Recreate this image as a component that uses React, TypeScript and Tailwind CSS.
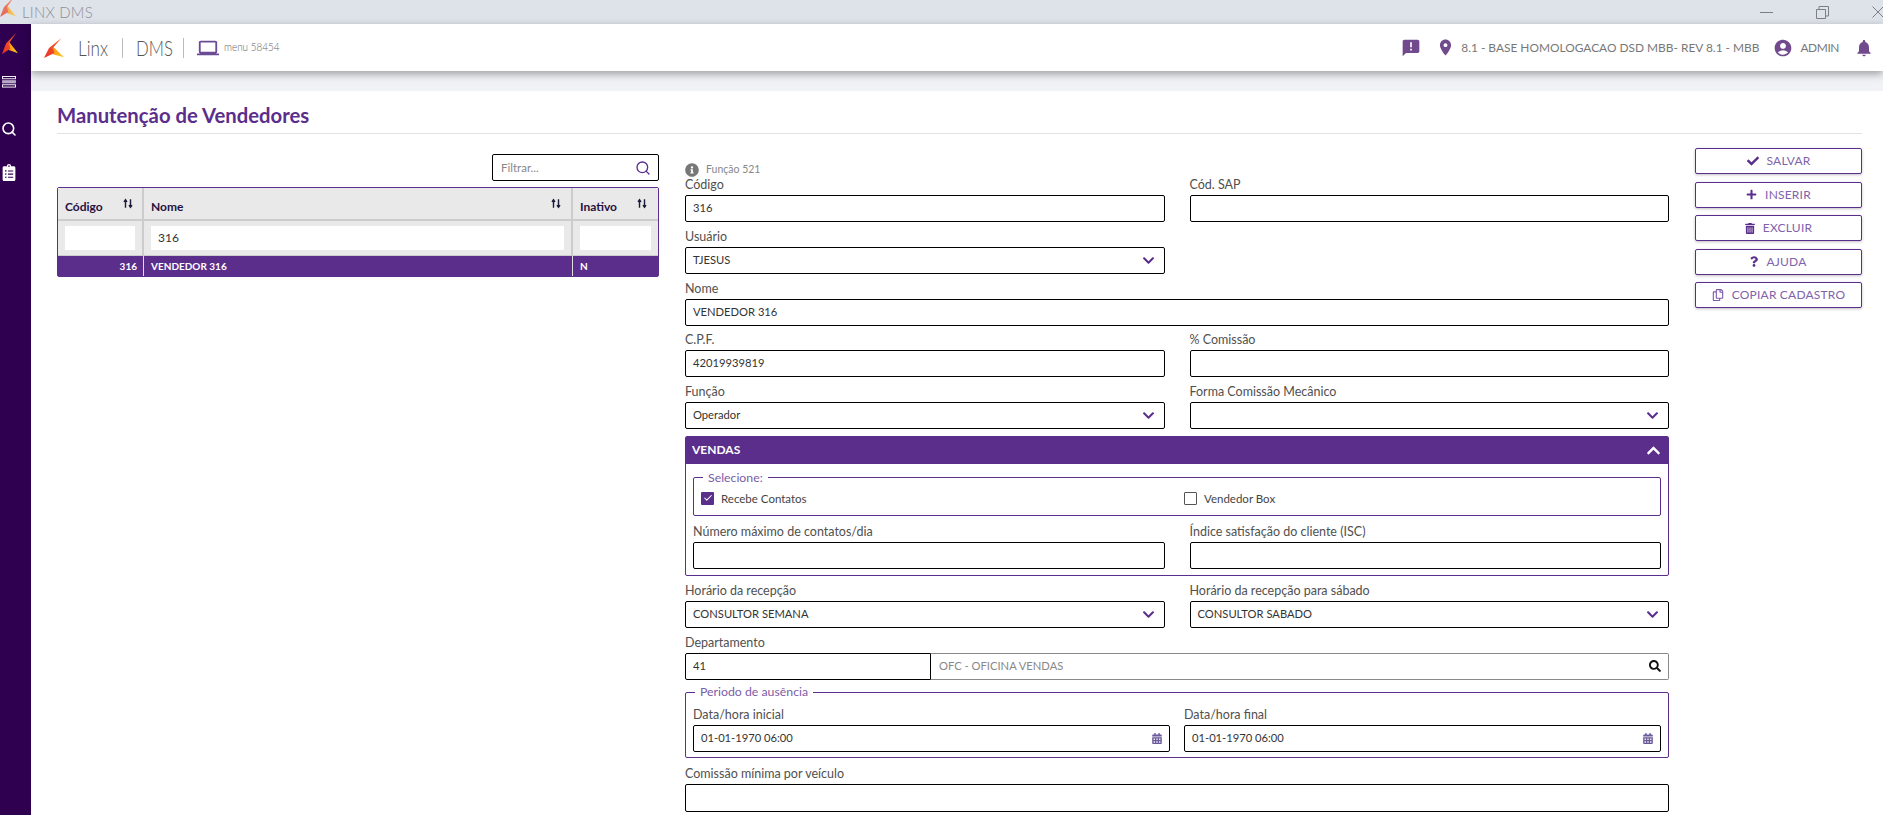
import React from "react";
import { FaCheck, FaPlus, FaTrashAlt, FaQuestion, FaRegCopy, FaCalendarAlt, FaSearch, FaInfoCircle, FaChevronDown, FaChevronUp, FaClipboardList } from "react-icons/fa";
import { MdAnnouncement, MdLocationOn, MdAccountCircle, MdNotifications, MdOutlineLaptop } from "react-icons/md";
import { Search, Check } from "lucide-react";

function Logo({ className }: { className: string }) {
  return (
    <svg viewBox="0 0 24 24" preserveAspectRatio="none" className={className}>
      <defs>
        <linearGradient id="lg1" x1="0" y1="1" x2="1" y2="0">
          <stop offset="0" stopColor="#e8312a" />
          <stop offset="1" stopColor="#f7631d" />
        </linearGradient>
        <linearGradient id="lg2" x1="0" y1="0" x2="1" y2="0.6">
          <stop offset="0" stopColor="#ff8a14" />
          <stop offset="1" stopColor="#ffc21a" />
        </linearGradient>
      </defs>
      <path d="M10 9.5 L24 23 L10.5 19.5 Z" fill="url(#lg2)" />
      <path d="M21 0 L6 12 L0 24 L12.5 18 L10.5 12 Z" fill="url(#lg1)" />
    </svg>
  );
}

function Sort() {
  return (
    <svg viewBox="0 0 12 12" className="w-[10px] h-[11px] text-[#1c1c3a]" fill="none" stroke="currentColor" strokeWidth="1.7">
      <path d="M3 11V2M1.2 4 3 1.5 4.8 4" />
      <path d="M9 1v9M7.2 8 9 10.5 10.8 8" />
    </svg>
  );
}

function Field({ label, children }: { label: string; children: React.ReactNode }) {
  return (
    <div className="mb-[6.75px] min-w-0">
      <div className="h-4 mb-0.5 leading-4 text-[12.5px] text-[#505050]">{label}</div>
      {children}
    </div>
  );
}

function Input({ value = "", h = "h-[27px]" }: { value?: string; h?: string }) {
  return (
    <div className={`${h} border border-black rounded-[2px] bg-white pl-[7px] pr-1.5 flex items-center text-[11.2px] text-[#333]`}>
      {value}
    </div>
  );
}

function Select({ value = "" }: { value?: string }) {
  return (
    <div className="h-[27px] border border-black rounded-[2px] bg-white pl-[7px] pr-[9px] flex items-center justify-between text-[11.2px] text-[#333]">
      <span>{value}</span>
      <FaChevronDown className="w-[13px] h-[13px] text-[#5b2e8c]" />
    </div>
  );
}

function DateInput({ value }: { value: string }) {
  return (
    <div className="h-[27px] border border-black rounded-[2px] bg-white pl-[7px] pr-[7px] flex items-center justify-between text-[11.2px] text-[#333]">
      <span>{value}</span>
      <FaCalendarAlt className="w-[10px] h-[11px] text-[#6b5a9a]" />
    </div>
  );
}

function ActionButton({ icon, label, gap = "gap-2" }: { icon: React.ReactNode; label: string; gap?: string }) {
  return (
    <div className={`h-[26px] border border-[#5b2e8c] rounded-[2px] bg-white shadow-[0_1px_3px_rgba(0,0,0,0.25)] flex items-center justify-center ${gap} text-[12px] tracking-[0.2px] text-[#8063ab]`}>
      {icon}
      <span>{label}</span>
    </div>
  );
}

export default function App() {
  return (
    <div className="w-[1883px] h-[815px] overflow-hidden flex flex-col bg-white font-['Lato','Liberation_Sans',sans-serif]">
      {/* window title bar */}
      <div className="h-6 shrink-0 bg-[#dee2e9] flex items-center justify-between overflow-hidden">
        <div className="flex items-center">
          <Logo className="w-[16px] h-[20px] opacity-70 -mt-2.5" />
          <span className="ml-1.5 text-[15px] font-light tracking-[0.2px] text-[#8d9198]">LINX DMS</span>
        </div>
        <div className="flex items-center gap-[43px] text-[#7d7f84] -mr-[1px]">
          <svg viewBox="0 0 13 13" className="w-[13px] h-[13px]" fill="none" stroke="currentColor"><path d="M0 6.5h13" /></svg>
          <svg viewBox="0 0 13 13" className="w-[13px] h-[13px]" fill="none" stroke="currentColor"><path d="M.5 3.5h9v9h-9zM3 3.5V.5h9.5v9.5H9.5" /></svg>
          <svg viewBox="0 0 12 12" className="w-[12px] h-[12px]" fill="none" stroke="currentColor"><path d="M.5.5l11 11M11.5.5l-11 11" /></svg>
        </div>
      </div>

      <div className="flex-1 flex min-h-0">
        {/* side rail */}
        <aside className="w-[31px] shrink-0 bg-[#2e004f] flex flex-col items-start">
          <Logo className="ml-[2px] mt-[9px] w-[16px] h-[21px]" />
          <svg viewBox="0 0 15 13" className="ml-[2px] mt-[22px] w-[14px] h-[12px]" fill="none">
            <rect x=".5" y=".5" width="14" height="2.5" stroke="#fff" />
            <rect x="0" y="4.5" width="15" height="3.5" fill="#b9a9c9" />
            <rect x=".5" y="9.5" width="14" height="2.5" stroke="#fff" />
          </svg>
          <Search className="ml-[1px] mt-[33px] w-[16px] h-[16px] text-white" strokeWidth={2.4} />
          <FaClipboardList className="ml-[2px] mt-[27px] w-[14px] h-[17px] text-white" />
        </aside>

        <div className="flex-1 min-w-0 flex flex-col">
          {/* app header */}
          <header className="h-[47px] shrink-0 bg-white shadow-[0_3px_8px_rgba(0,0,0,0.35)] flex items-center justify-between pl-[13px] pr-[9px] relative z-10">
            <div className="flex items-center">
              <Logo className="w-[20px] h-[20px]" />
              <span className="ml-[14px] w-[30px] whitespace-nowrap origin-left scale-x-[0.78] text-[22px] font-light text-[#555]">Linx</span>
              <span className="ml-[14px] h-5 w-px bg-[#bbb]" />
              <span className="ml-[13px] w-[34px] whitespace-nowrap origin-left scale-x-[0.76] text-[22px] font-light text-[#555]">DMS</span>
              <span className="ml-[13px] h-5 w-px bg-[#bbb]" />
              <MdOutlineLaptop className="ml-[13px] w-[22px] h-[22px] text-[#6d4a96]" />
              <span className="ml-[5px] w-[55px] whitespace-nowrap origin-left scale-x-[0.9] text-[11px] font-light text-[#666]">menu 58454</span>
            </div>
            <div className="flex items-center text-[11.9px] text-[#777]">
              <MdAnnouncement className="w-[20px] h-[20px] text-[#704a8c]" />
              <MdLocationOn className="ml-[15px] w-[19px] h-[19px] text-[#704a8c]" />
              <span className="ml-[6px]">8.1 - BASE HOMOLOGACAO DSD MBB- REV 8.1 - MBB</span>
              <MdAccountCircle className="ml-[14px] w-[20px] h-[20px] text-[#704a8c]" />
              <span className="ml-[7px] tracking-[-0.4px]">ADMIN</span>
              <MdNotifications className="ml-[15px] w-[20px] h-[20px] text-[#704a8c]" />
            </div>
          </header>
          <div className="h-5 shrink-0 bg-[#f0f2f5]" />

          {/* page */}
          <main className="flex-1 min-h-0 pl-[26px] pr-[21px]">
            <div className="h-[43px] border-b border-[#e2e2e2] flex items-center pt-[6px]">
              <h1 className="text-[20.3px] font-bold text-[#5b2e8c]">Manutenção de Vendedores</h1>
            </div>

            <div className="flex gap-[26px]">
              {/* list */}
              <section className="w-[602px] shrink-0 pt-5">
                <div className="flex justify-end">
                  <div className="w-[167px] h-[27px] border border-black rounded-[2px] flex items-center justify-between pl-2 pr-[7px] text-[11.5px] text-[#888]">
                    <span>Filtrar...</span>
                    <Search className="w-[16px] h-[16px] text-[#5b2e8c]" strokeWidth={2} />
                  </div>
                </div>
                <div className="mt-1.5 border border-[#5b2e8c] rounded-[2px] text-[12px]">
                  <div className="grid grid-cols-[86px_1fr_85px] h-[33px] bg-[#e9e9e9] border-b-2 border-[#ccc] font-bold text-[#26123e]">
                    <div className="border-r-2 border-[#ccc] pl-[7px] pr-[9px] flex items-start justify-between pt-2.5"><span>Código</span><Sort /></div>
                    <div className="border-r-2 border-[#ccc] pl-[7px] pr-[10px] flex items-start justify-between pt-2.5"><span>Nome</span><Sort /></div>
                    <div className="pl-[7px] pr-[11px] flex items-start justify-between pt-2.5"><span>Inativo</span><Sort /></div>
                  </div>
                  <div className="grid grid-cols-[86px_1fr_85px] h-[35px] bg-[#e9e9e9] border-b border-[#ccc]">
                    <div className="border-r-2 border-[#ccc] px-[7px] flex items-center"><div className="h-[24px] w-full bg-white" /></div>
                    <div className="border-r-2 border-[#ccc] px-[7px] flex items-center"><div className="h-[24px] w-full bg-white px-[7px] flex items-center text-[#333]">316</div></div>
                    <div className="px-[7px] flex items-center"><div className="h-[24px] w-full bg-white" /></div>
                  </div>
                  <div className="grid grid-cols-[86px_1fr_85px] h-[20px] bg-[#5b2e8c] text-white text-[10px] font-bold">
                    <div className="border-r border-[#ddd] px-[6px] flex items-center justify-end">316</div>
                    <div className="border-r border-[#ddd] px-[7px] flex items-center">VENDEDOR 316</div>
                    <div className="px-[7px] flex items-center">N</div>
                  </div>
                </div>
              </section>

              {/* form */}
              <section className="w-[984px] shrink-0">
                <div className="h-[43px] pt-[29px] flex items-center gap-[7px] text-[10.5px] text-[#888]">
                  <FaInfoCircle className="w-[14px] h-[14px] text-[#777]" />
                  <span>Função 521</span>
                </div>
                <div className="grid grid-cols-2 gap-x-[25px]">
                  <Field label="Código"><Input value="316" /></Field>
                  <Field label="Cód. SAP"><Input /></Field>
                  <Field label="Usuário"><Select value="TJESUS" /></Field>
                  <div />
                  <div className="col-span-2"><Field label="Nome"><Input value="VENDEDOR 316" /></Field></div>
                  <Field label="C.P.F."><Input value="42019939819" /></Field>
                  <Field label="% Comissão"><Input /></Field>
                  <Field label="Função"><Select value="Operador" /></Field>
                  <Field label="Forma Comissão Mecânico"><Select /></Field>
                </div>

                <div className="border border-[#5b2e8c] rounded-[2px] h-[140px]">
                  <div className="h-[27px] bg-[#5b2e8c] text-white flex items-center justify-between pl-[6px] pr-[7px] text-[12px] font-bold">
                    <span>VENDAS</span>
                    <FaChevronUp className="w-[15px] h-[15px]" />
                  </div>
                  <div className="px-[7px]">
                    <fieldset className="mt-[6px] border border-[#5b2e8c] rounded-[2px] h-[46px]">
                      <legend className="ml-[9px] px-[5px] h-4 leading-4 text-[12.3px] text-[#7b5ca8]">Selecione:</legend>
                      <div className="grid grid-cols-2 gap-x-[14px] px-[7px] pt-[4px] text-[11.5px] text-[#444]">
                        <div className="flex items-center gap-[7px]">
                          <span className="w-[13px] h-[13px] bg-[#5b2e8c] rounded-[1px] flex items-center justify-center"><Check className="w-[10px] h-[10px] text-white" strokeWidth={2.5} /></span>
                          <span>Recebe Contatos</span>
                        </div>
                        <div className="flex items-center gap-[7px]">
                          <span className="w-[13px] h-[13px] border border-[#555] rounded-[1px]" />
                          <span>Vendedor Box</span>
                        </div>
                      </div>
                    </fieldset>
                    <div className="grid grid-cols-2 gap-x-[25px] mt-[8px]">
                      <Field label="Número máximo de contatos/dia"><Input /></Field>
                      <Field label="Índice satisfação do cliente (ISC)"><Input /></Field>
                    </div>
                  </div>
                </div>

                <div className="grid grid-cols-2 gap-x-[25px] mt-[7px]">
                  <Field label="Horário da recepção"><Select value="CONSULTOR SEMANA" /></Field>
                  <Field label="Horário da recepção para sábado"><Select value="CONSULTOR SABADO" /></Field>
                </div>

                <Field label="Departamento">
                  <div className="flex h-[27px]">
                    <div className="w-[246px] shrink-0 border border-black rounded-l-[2px] pl-[7px] flex items-center text-[11.2px] text-[#333]">41</div>
                    <div className="flex-1 border border-l-0 border-[#888] rounded-r-[2px] pl-2 pr-[7px] flex items-center justify-between text-[11.2px] text-[#888]">
                      <span>OFC - OFICINA VENDAS</span>
                      <FaSearch className="w-[12px] h-[12px] text-[#111]" />
                    </div>
                  </div>
                </Field>

                <fieldset className="mt-[-2px] border border-[#5b2e8c] rounded-[2px] h-[74px] px-[7px]">
                  <legend className="ml-[2px] px-[5px] h-4 leading-4 text-[12.3px] text-[#7b5ca8]">Periodo de ausência</legend>
                  <div className="grid grid-cols-2 gap-x-[14px]">
                    <div>
                      <div className="h-4 mb-0.5 mt-[7px] leading-4 text-[12.5px] text-[#505050]">Data/hora inicial</div>
                      <DateInput value="01-01-1970 06:00" />
                    </div>
                    <div>
                      <div className="h-4 mb-0.5 mt-[7px] leading-4 text-[12.5px] text-[#505050]">Data/hora final</div>
                      <DateInput value="01-01-1970 06:00" />
                    </div>
                  </div>
                </fieldset>

                <div className="mt-[8px]">
                  <Field label="Comissão mínima por veículo"><Input h="h-[28px]" /></Field>
                </div>
              </section>

              {/* actions */}
              <section className="w-[167px] shrink-0 pt-[14px] flex flex-col gap-[7.5px]">
                <ActionButton icon={<FaCheck className="w-[12px] h-[12px] text-[#5b2e8c]" />} label="SALVAR" />
                <ActionButton icon={<FaPlus className="w-[11px] h-[11px] text-[#5b2e8c]" />} label="INSERIR" />
                <ActionButton icon={<FaTrashAlt className="w-[10px] h-[11px] text-[#5b2e8c]" />} label="EXCLUIR" />
                <ActionButton icon={<FaQuestion className="w-[8px] h-[11px] text-[#5b2e8c]" />} label="AJUDA" />
                <ActionButton icon={<FaRegCopy className="w-[12px] h-[12px] text-[#7b5ca8]" />} label="COPIAR CADASTRO" />
              </section>
            </div>
          </main>
        </div>
      </div>
    </div>
  );
}
